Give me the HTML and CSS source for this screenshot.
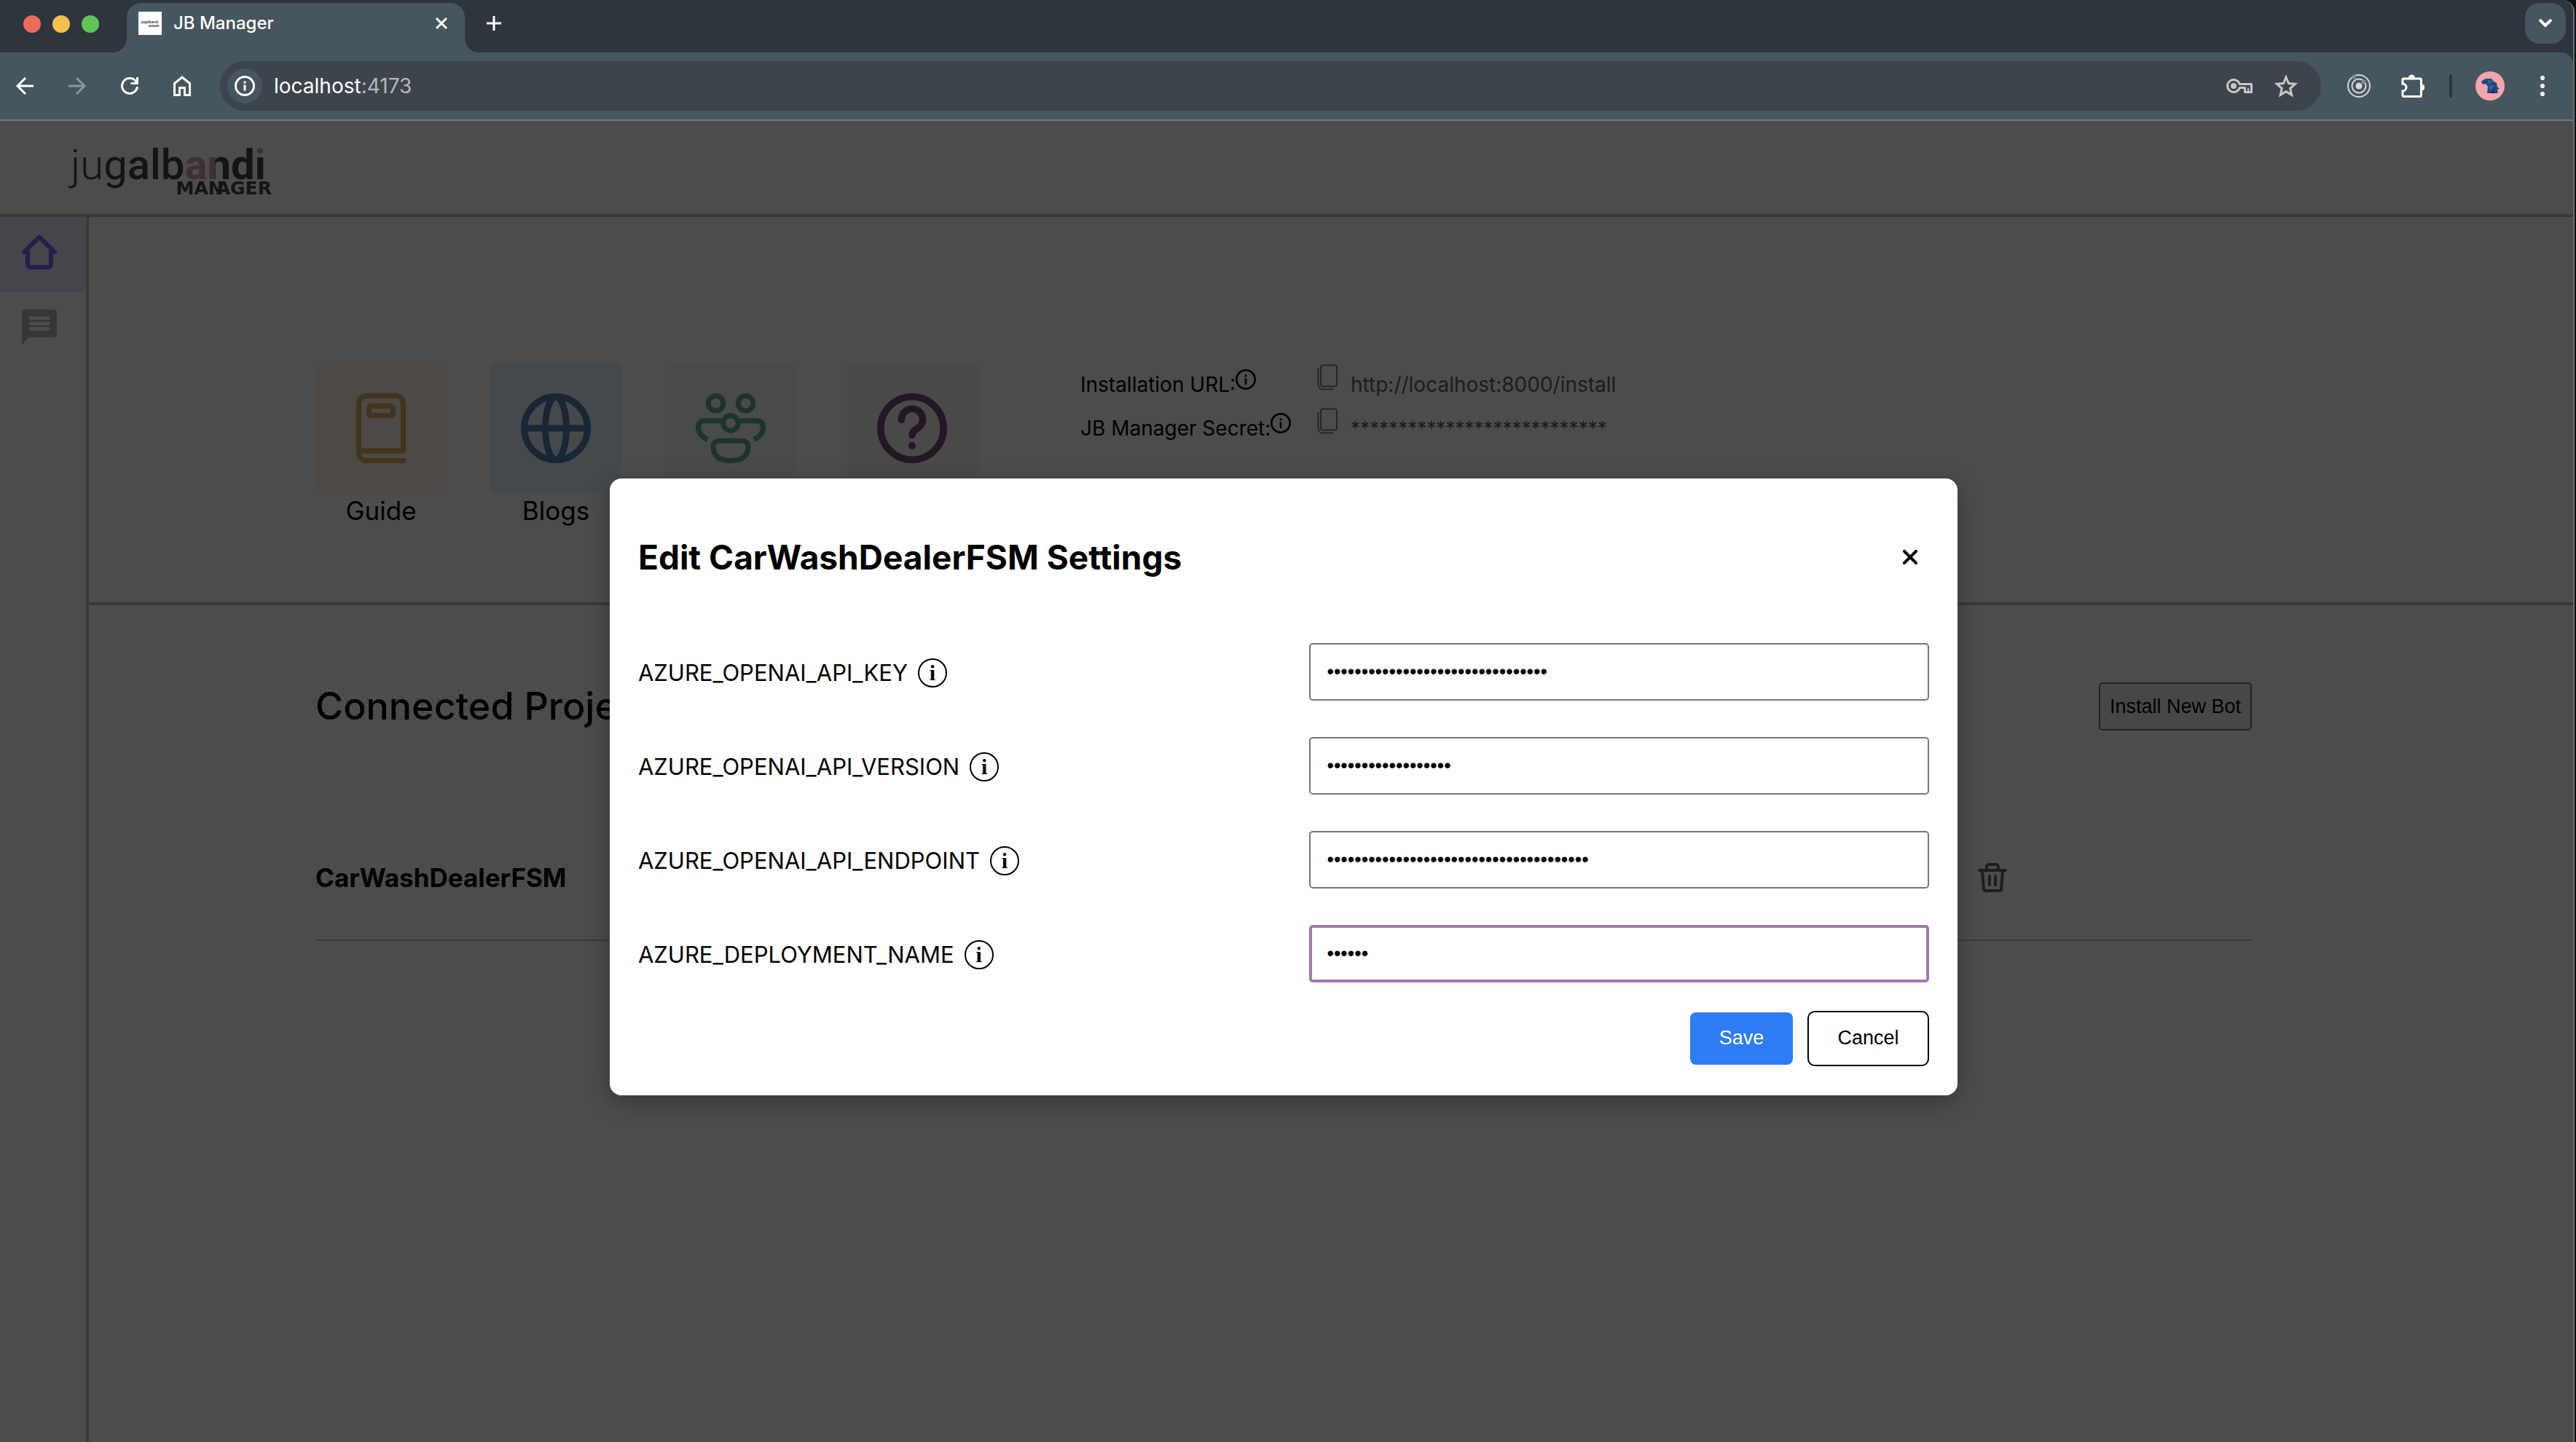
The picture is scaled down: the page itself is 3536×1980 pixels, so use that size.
FILE: index.html
```html
<!DOCTYPE html>
<html lang="en">
<head>
<meta charset="utf-8">
<title>JB Manager</title>
<link rel="stylesheet" href="styles.css">
</head>
<body>
<div class="window">
  <div class="tab-strip">
    <div class="lights"><span class="light red"></span><span class="light yellow"></span><span class="light green"></span></div>
    <div class="tab">
      <svg class="favicon" viewBox="0 0 32 32"><rect width="32" height="32" fill="#fff"/><text x="4" y="16" font-family="Roboto" font-size="5" fill="#333" font-weight="500">jugalbandi</text><text x="14" y="21" font-family="Roboto" font-size="3" fill="#333" font-weight="700">MANAGER</text></svg>
      <span class="tab-title">JB Manager</span>
      <button class="icon-button" aria-label="Close tab"><svg width="18" height="18" viewBox="0 0 18 18" fill="none" stroke="#fff" stroke-width="3"><path d="M2 2l14 14M16 2L2 16"/></svg></button>
    </div>
    <button class="icon-button new-tab" aria-label="New tab"><svg width="20" height="20" viewBox="0 0 20 20" fill="none" stroke="#fff" stroke-width="3"><path d="M10 0v20M0 10h20"/></svg></button>
    <button class="icon-button tab-search" aria-label="Search tabs"><svg width="18" height="12" viewBox="0 0 18 12" fill="none" stroke="#fff" stroke-width="4"><path d="M1 1l8 8 8-8"/></svg></button>
  </div>
  <div class="toolbar">
    <div class="nav-buttons">
      <button class="icon-button" aria-label="Back"><svg width="24" height="24" viewBox="0 0 24 24" fill="none" stroke="#fff" stroke-width="3"><path d="M24 12H2M13 1L2 12l11 11"/></svg></button>
      <button class="icon-button" aria-label="Forward"><svg width="24" height="24" viewBox="0 0 24 24" fill="none" stroke="#8b959b" stroke-width="3"><path d="M0 12h22M11 1l11 11-11 11"/></svg></button>
      <button class="icon-button" aria-label="Reload"><svg width="24" height="24" viewBox="0 0 24 24" fill="none" stroke="#fff" stroke-width="3"><path d="M22.500 13A10.500 10.500 0 1 1 20 5l2 3M22.500 0v8.500h-9"/></svg></button>
      <button class="icon-button" aria-label="Home"><svg width="24" height="28" viewBox="0 0 24 28" fill="none" stroke="#fff" stroke-width="3"><path d="M1.500 26.500V10.500L12 2l10.500 8.500v16h-7v-10h-7v10z"/></svg></button>
    </div>
    <div class="omnibox">
      <button class="icon-button site-info" aria-label="Site information"><svg width="28" height="28" viewBox="0 0 28 28"><circle cx="14" cy="14" r="12.500" fill="none" stroke="#fff" stroke-width="3"/><path d="M12.500 12.500h3v8h-3zM12.500 7.500h3v3h-3z" fill="#fff"/></svg></button>
      <span class="address">localhost<span class="port">:4173</span></span>
      <button class="icon-button" aria-label="Passwords"><svg width="36" height="20" viewBox="0 0 36 20" fill="none" stroke="#c7c7c7" stroke-width="3"><path d="M18.200 7.500A8.500 8.500 0 1 0 18.200 12.500H25.500V18.500H34.500V7.500z" stroke-linejoin="round"/><circle cx="10" cy="10" r="4" fill="#c7c7c7" stroke="none"/><path d="M30 12.500v6" stroke-width="2"/></svg></button>
      <button class="icon-button" aria-label="Bookmark"><svg width="32" height="32" viewBox="0 0 32 32" fill="none" stroke="#c7c7c7" stroke-width="3"><path d="M16 4l3.500 8.500 9 .8-6.800 6 2 9-7.700-4.700-7.700 4.700 2-9-6.800-6 9-.8z"/></svg></button>
    </div>
    <div class="extensions">
      <button class="icon-button" aria-label="Extension"><svg width="32" height="32" viewBox="0 0 32 32" fill="none" stroke="#d5d8da" stroke-width="2"><circle cx="16" cy="16" r="15"/><circle cx="16" cy="16" r="9.500"/><circle cx="16" cy="16" r="4.500" fill="#d5d8da" stroke="none"/><g stroke="none" fill="#8b8985"><circle cx="9" cy="3.500" r="3"/><circle cx="22.500" cy="10.500" r="3"/></g></svg></button>
      <button class="icon-button" aria-label="Extensions"><svg width="32" height="32" viewBox="0 0 32 32"><path d="M4 6h22a1.500 1.500 0 0 1 1.500 1.500V29a1.500 1.500 0 0 1-1.500 1.500H3.500A1.500 1.500 0 0 1 2 29V23a5 5 0 0 0 0-10V7.500A1.500 1.500 0 0 1 3.500 6z" fill="none" stroke="#fff" stroke-width="3"/><path d="M10 5a4.500 4.500 0 0 1 9 0zM28 13.500a4.500 4.500 0 0 1 0 9z" fill="#fff"/></svg></button>
      <span class="divider"></span>
      <button class="icon-button" aria-label="Profile"><svg width="40" height="40" viewBox="0 0 40 40"><circle cx="20" cy="20" r="20" fill="#f3a5ab"/><path d="M8 15l3 3 3-1 3 4-1 9h7l1-4 2 4h5l-1-5 3-1-3-3-1-5-5-3-2-3h-8l-5 3z" fill="#23477f"/><path d="M17 12l7 1-7 5zM18 20l9-1-7 7z" fill="#2f66a8"/><path d="M21 30l3-4 3 4z" fill="#152238"/></svg></button>
      <button class="icon-button" aria-label="Menu"><svg width="8" height="28" viewBox="0 0 8 28" fill="#fff"><circle cx="4" cy="3" r="3"/><circle cx="4" cy="14" r="3"/><circle cx="4" cy="25" r="3"/></svg></button>
    </div>
  </div>

  <div class="page">
    <header class="app-header">
      <a class="logo" href="#">
        <span class="logo-name"><span class="w3">ju</span><span class="w4">g</span><span class="w5">al</span><span class="w5">b</span><span class="w7 pink">a</span><span class="w7 split-n">n</span><span class="w7">d</span><span class="w7 split-i">i</span></span>
        <span class="logo-sub"><span>MAN</span><span class="overlap">AGER</span></span>
      </a>
    </header>
    <div class="app-body">
      <nav class="sidebar">
        <a class="side-link active" href="#" aria-label="Home"><svg width="48" height="48" viewBox="0 0 48 48" fill="none" stroke="#8068fa" stroke-width="6" stroke-linecap="round" stroke-linejoin="round"><path d="M3 24L24 3.500 45 24M8 22v19a4 4 0 0 0 4 4h24a4 4 0 0 0 4-4V22"/></svg></a>
        <a class="side-link" href="#" aria-label="Chat"><svg width="48" height="48" viewBox="0 0 48 48"><path d="M4.800 0h38.400A4.800 4.800 0 0 1 48 4.800v28.800a4.800 4.800 0 0 1-4.800 4.800H9.600L0 48V4.800A4.800 4.800 0 0 1 4.800 0z" fill="#b4b4b4"/><path d="M12 12h24M12 19.200h24M12 26.400h24" stroke="#fff" stroke-width="5" stroke-linecap="round"/></svg></a>
      </nav>
      <main class="content">
        <section class="overview">
          <div class="tiles">
            <a class="tile-link" href="#"><span class="tile guide"><svg width="96" height="96" viewBox="0 0 96 96" fill="none" stroke="#e0b060" stroke-width="7"><path d="M79 92.500H28A10.500 10.500 0 0 1 17.500 82V14A10.500 10.500 0 0 1 28 3.500H68A10.500 10.500 0 0 1 78.500 14V79H20" stroke-linecap="round" stroke-linejoin="round"/><rect x="31.500" y="17.500" width="33" height="13" rx="3"/></svg></span>Guide</a>
            <a class="tile-link" href="#"><span class="tile blogs"><svg width="96" height="96" viewBox="0 0 96 96" fill="none" stroke="#5880b2" stroke-width="9"><circle cx="48" cy="48" r="43.500"/><ellipse cx="48" cy="48" rx="14.500" ry="43"/><path d="M5 48h86"/></svg></span>Blogs</a>
            <a class="tile-link wide" href="#" aria-label="Community"><span class="tile community"><svg width="96" height="96" viewBox="0 0 96 96" fill="none" stroke="#62ad8f" stroke-width="7"><circle cx="27.500" cy="13.700" r="10.300"/><circle cx="68.500" cy="13.700" r="10.300"/><circle cx="48" cy="41" r="10.300"/><path d="M35 37.700H12A8 8 0 0 0 3.500 46q0 12 13 17.500M61 37.700H84A8 8 0 0 1 92.500 46q0 12-13 17.500M32 65.200H64A8 8 0 0 1 72 73q0 19.500-24 19.500T24 73a8 8 0 0 1 8-7.800z"/></svg></span></a>
            <a class="tile-link" href="#" aria-label="Help"><span class="tile help"><svg width="96" height="96" viewBox="0 0 96 96" fill="none" stroke="#7e4c80" stroke-width="9.600" stroke-linecap="round"><circle cx="48" cy="48" r="43.200"/><path d="M33.500 36.500A14.500 14.500 0 1 1 55 48.500q-7 4-7 9"/><circle cx="48" cy="72" r="5" fill="#7e4c80" stroke="none"/></svg></span></a>
          </div>
          <dl class="install-info">
            <dt>Installation URL:<svg class="hint" viewBox="0 0 28 28"><circle cx="14" cy="14" r="12.700" fill="none" stroke="#000" stroke-width="2.600"/><path d="M12.700 12.500h2.600v8.500h-2.600zM12.700 7.500h2.600v3h-2.600z"/></svg></dt>
            <dd><button class="icon-button copy" aria-label="Copy URL"><svg width="28" height="36" viewBox="0 0 28 36" fill="none" stroke="#808080" stroke-width="2"><rect x="5" y="1.500" width="22" height="29" rx="3"/><path d="M1.500 6v23a5.500 5.500 0 0 0 5.500 5.500h15"/></svg></button>http://localhost:8000/install</dd>
            <dt>JB Manager Secret:<svg class="hint" viewBox="0 0 28 28"><circle cx="14" cy="14" r="12.700" fill="none" stroke="#000" stroke-width="2.600"/><path d="M12.700 12.500h2.600v8.500h-2.600zM12.700 7.500h2.600v3h-2.600z"/></svg></dt>
            <dd class="secret"><button class="icon-button copy" aria-label="Copy secret"><svg width="28" height="36" viewBox="0 0 28 36" fill="none" stroke="#808080" stroke-width="2"><rect x="5" y="1.500" width="22" height="29" rx="3"/><path d="M1.500 6v23a5.500 5.500 0 0 0 5.500 5.500h15"/></svg></button>***************************</dd>
          </dl>
        </section>
        <section class="projects">
          <div class="projects-head">
            <h1>Connected Projects</h1>
            <button class="install-button">Install New Bot</button>
          </div>
          <div class="project-row">
            <h2>CarWashDealerFSM</h2>
            <button class="icon-button" aria-label="Delete"><svg width="40" height="40" viewBox="0 0 40 40" fill="none" stroke="#676767" stroke-width="4" stroke-linecap="round" stroke-linejoin="round"><path d="M2 10h36M12 9V5a3 3 0 0 1 3-3h10a3 3 0 0 1 3 3v4M6 11l2 25a2 2 0 0 0 2 2h20a2 2 0 0 0 2-2l2-25M16 18v12M24 18v12"/></svg></button>
          </div>
        </section>
      </main>
    </div>

    <div class="overlay">
      <form class="modal" role="dialog" aria-labelledby="modal-title">
        <div class="modal-head">
          <h2 id="modal-title">Edit CarWashDealerFSM Settings</h2>
          <button type="button" class="icon-button" aria-label="Close"><svg width="20" height="20" viewBox="0 0 20 20" fill="none" stroke="#000" stroke-width="4" stroke-linecap="round"><path d="M2 2l16 16M18 2L2 18"/></svg></button>
        </div>
        <div class="fields">
          <div class="field"><label for="key">AZURE_OPENAI_API_KEY</label><span class="info">i</span><input id="key" type="password" value="aaaaaaaaaaaaaaaaaaaaaaaaaaaaaaaa"></div>
          <div class="field"><label for="version">AZURE_OPENAI_API_VERSION</label><span class="info">i</span><input id="version" type="password" value="aaaaaaaaaaaaaaaaaa"></div>
          <div class="field"><label for="endpoint">AZURE_OPENAI_API_ENDPOINT</label><span class="info">i</span><input id="endpoint" type="password" value="aaaaaaaaaaaaaaaaaaaaaaaaaaaaaaaaaaaaaa"></div>
          <div class="field"><label for="deployment">AZURE_DEPLOYMENT_NAME</label><span class="info">i</span><input id="deployment" class="current" type="password" value="aaaaaa"></div>
        </div>
        <div class="actions">
          <button type="button" class="save">Save</button>
          <button type="button" class="cancel">Cancel</button>
        </div>
      </form>
    </div>
  </div>
</div>
</body>
</html>
```
FILE: styles.css
```css
* { box-sizing: border-box; }
body { margin: 0; background: #0c1114; font-family: Inter, "Liberation Sans", sans-serif; color: #000; }
h1, h2, dl, dd { margin: 0; }
a { color: inherit; text-decoration: none; }
svg { display: block; flex: none; }
.icon-button { display: flex; align-items: center; justify-content: center; padding: 0; border: 0; background: none; }

.window { display: flex; flex-direction: column; min-height: 100vh; margin-right: 2px; border-right: 2px solid #6c6f72; border-top-right-radius: 16px; overflow: hidden; background: #2e353d; }

/* Browser chrome */
.tab-strip { display: flex; align-items: center; height: 72px; padding: 4px 10px 0 32px; }
.lights { display: flex; gap: 16px; width: 142px; padding-bottom: 10px; }
.light { width: 24px; height: 24px; border-radius: 50%; }
.red { background: #ed6a5e; }
.yellow { background: #f5bf4f; }
.green { background: #61c554; }
.tab { position: relative; display: flex; align-items: center; align-self: stretch; width: 464px; padding: 0 23px 12px 16px; border-radius: 20px 20px 0 0; background: #47555e; color: #fff; }
.tab::before, .tab::after { content: ""; position: absolute; bottom: 0; width: 20px; height: 20px; }
.tab::before { right: 100%; background: radial-gradient(circle at 0 0, transparent 20px, #47555e 20px); }
.tab::after { left: 100%; background: radial-gradient(circle at 100% 0, transparent 20px, #47555e 20px); }
.favicon { width: 32px; height: 32px; }
.tab-title { flex: 1; margin-left: 16px; font-size: 24px; font-weight: 500; line-height: 32px; }
.new-tab { margin: 0 auto 12px 30px; }
.tab-search { width: 56px; height: 56px; margin-bottom: 12px; border-radius: 20px; background: #47555e; }

.toolbar { display: flex; align-items: center; height: 94px; padding: 0 38px 0 22px; border-bottom: 2px solid #6f7b83; border-radius: 0 16px 0 0; background: #47555e; }
.nav-buttons { display: flex; align-items: center; gap: 48px; }
.omnibox { display: flex; align-items: center; flex: 1; height: 68px; margin: 0 36px 0 40px; padding: 0 32px 0 10px; border-radius: 34px; background: #3d444b; gap: 30px; }
.site-info { width: 48px; height: 48px; border-radius: 50%; background: #47555e; }
.address { flex: 1; margin-left: -14px; color: #fff; font-size: 28px; line-height: 36px; }
.port { color: #b4b8bb; }
.extensions { display: flex; align-items: center; gap: 32px; }
.extensions .icon-button:first-child { margin-right: 10px; }
.divider { width: 4px; height: 32px; margin-left: 2px; border-radius: 2px; background: #2e353d; }
.extensions .icon-button:last-child { margin-left: 16px; }

/* Application */
.page { position: relative; display: flex; flex-direction: column; flex: 1; background: #fff; }
.app-header { height: 132px; padding: 28px 97px; border-bottom: 4px solid #c0c0c0; }
.logo { display: inline-block; color: #4a4244; }
.logo-name { display: block; font-family: Roboto, sans-serif; font-size: 58px; line-height: 64px; white-space: nowrap; }
.w3 { font-weight: 300; }
.w4 { font-weight: 400; }
.w5 { font-weight: 500; }
.w7 { font-weight: 700; }
.pink { color: #cfa0aa; }
.split-n { color: transparent; background: linear-gradient(90deg, #cfa0aa 11px, #4a4244 11px); -webkit-background-clip: text; background-clip: text; }
.split-i { color: transparent; background: linear-gradient(#cfa0aa 23px, #4a4244 23px); -webkit-background-clip: text; background-clip: text; }
.logo-sub { display: flex; justify-content: flex-end; margin: -13px -8px 0 0; font-family: "DejaVu Sans", sans-serif; font-size: 25px; font-weight: 700; line-height: 28px; }
.overlap { margin-left: -10px; }

.app-body { display: flex; flex: 1; }
.sidebar { width: 122px; border-right: 4px solid #c0c0c0; }
.side-link { display: block; padding: 24px 30px 31px; }
.side-link.active { background: #e9e6fa; }
.content { flex: 1; }

.overview { display: flex; gap: 141px; padding: 200px 311px 103px; border-bottom: 4px solid #c0c0c0; }
.tiles { display: flex; gap: 60px; }
.tile-link { display: flex; flex-direction: column; font-size: 35px; line-height: 46px; text-align: center; }
.tile-link.wide { width: 189px; }
.tile { display: flex; align-items: center; justify-content: center; width: 180px; height: 180px; border-radius: 8px; }
.guide { background: #fff3ea; }
.blogs { background: #e6f3fb; }
.community { background: #f3faf2; }
.help { background: #f8f3ed; }
.install-info { display: grid; grid-template-columns: 323px auto; grid-auto-rows: 60px; font-size: 28px; line-height: 60px; }
.install-info dt, .install-info dd { display: flex; }
.install-info dd { color: #5f5f5f; }
.install-info .secret { font-size: 26px; }
.hint { width: 28px; height: 28px; margin-top: 9px; }
.copy { align-self: flex-start; margin: 2px 18px 0 2px; }

.projects { padding: 106px 441px 106px 311px; }
.projects-head { display: flex; align-items: center; justify-content: space-between; }
.projects-head h1 { font-size: 52px; font-weight: 500; line-height: 66px; }
.install-button { height: 66px; padding: 0 13px; border: 2px solid #767676; border-radius: 5px; background: #efefef; font-family: "Liberation Sans", sans-serif; font-size: 27px; }
.project-row { display: flex; align-items: center; justify-content: space-between; margin-top: 118px; padding: 61px 336px 62px 0; border-bottom: 2px solid #c0c0c0; }
.project-row h2 { font-size: 35px; font-weight: 700; line-height: 46px; }

/* Settings dialog */
.overlay { position: absolute; inset: 0; display: flex; align-items: center; justify-content: center; padding: 14px 8px 0 0; background: rgba(0, 0, 0, 0.7); }
.modal { width: 52.5%; padding: 40px 39px; border-radius: 16px; background: #fff; box-shadow: 0 8px 32px rgba(0, 0, 0, 0.3); }
.modal-head { display: flex; align-items: center; justify-content: space-between; padding: 38px 16px 88px 0; }
.modal-head h2 { font-size: 46px; font-weight: 700; line-height: 60px; }
.fields { display: flex; flex-direction: column; gap: 50px; }
.field { display: flex; align-items: center; gap: 14px; font-size: 31px; line-height: 40px; }
.field label, .info { margin-top: 4px; }
.info { display: flex; align-items: center; justify-content: center; width: 40px; height: 40px; border: 2px solid #000; border-radius: 50%; font-family: "Liberation Serif", serif; font-size: 30px; font-weight: 700; }
.field input { width: 48%; height: 79px; margin-left: auto; padding: 0 22px; border: 2px solid #767676; border-radius: 5px; background: #fff; color: #000; font-family: "Liberation Sans", sans-serif; font-size: 27px; }
.field .current { padding: 0 20px; border: 4px solid #a678b0; }
.actions { display: flex; align-items: center; justify-content: flex-end; gap: 20px; margin-top: 39px; }
.actions button { font-family: "Liberation Sans", sans-serif; font-size: 27px; }
.save { width: 141px; height: 72px; border: 0; border-radius: 8px; background: #2e7cf6; color: #fff; }
.cancel { width: 167px; height: 76px; border: 2px solid #000; border-radius: 10px; background: #fff; color: #000; }
```
